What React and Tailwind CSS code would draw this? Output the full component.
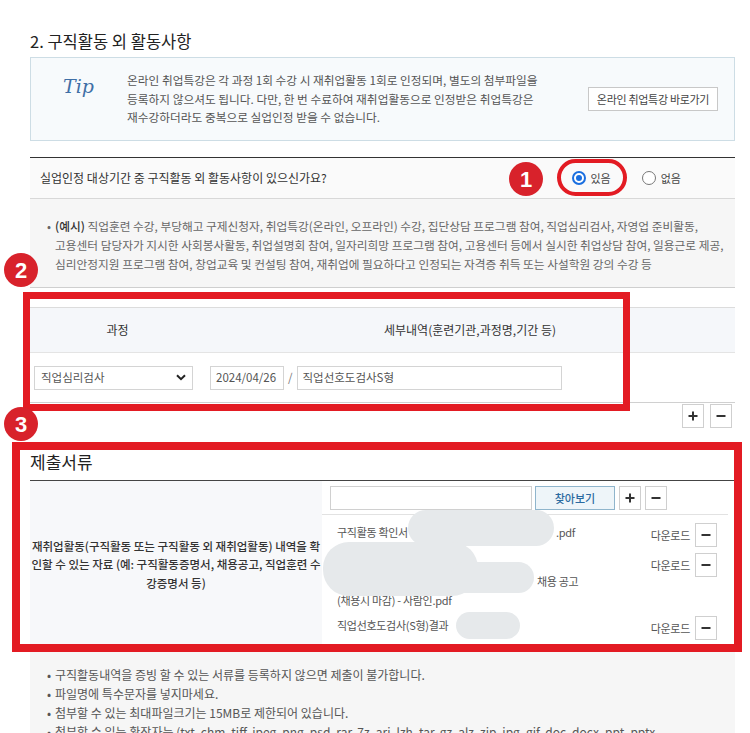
import React from "react";

function Plus() {
  return (
    <svg width="10" height="10" viewBox="0 0 10 10">
      <path d="M5 0.5V9.5M0.5 5H9.5" stroke="#333" strokeWidth="2" />
    </svg>
  );
}
function Minus() {
  return (
    <svg width="10" height="10" viewBox="0 0 10 10">
      <path d="M0.5 5H9.5" stroke="#333" strokeWidth="2" />
    </svg>
  );
}
function SqBtn({ children }) {
  return (
    <div className="w-[22px] h-[24px] border border-[#cfcfcf] bg-white flex items-center justify-center shrink-0">
      {children}
    </div>
  );
}
function Badge({ n, cls }) {
  return (
    <div
      className={
        "absolute w-[34px] h-[34px] rounded-full bg-[#d8222b] flex items-center justify-center text-white text-[22px] font-bold font-['Liberation_Sans',sans-serif] " +
        cls
      }
    >
      {n}
    </div>
  );
}

export default function App() {
  return (
    <div className="relative w-[750px] h-[733px] overflow-hidden bg-white text-[#555] font-['Noto_Sans_CJK_KR',sans-serif]">
      <div className="ml-[30px] w-[705px] pt-[31px]">
        <h2 className="text-[16.5px] leading-[20px] text-[#222]">2. 구직활동 외 활동사항</h2>

        {/* Tip box */}
        <div className="mt-[6px] h-[84px] border border-[#cddde5] bg-[#f7fafc] flex items-center">
          <div className="w-[96px] self-start pt-[14px] pl-[32px] font-['DejaVu_Serif',serif] italic text-[19px] text-[#3f6fa6]">
            Tip
          </div>
          <div className="flex-1 text-[11.7px] leading-[18.5px] text-[#555] whitespace-nowrap">
            <div>온라인 취업특강은 각 과정 1회 수강 시 재취업활동 1회로 인정되며, 별도의 첨부파일을</div>
            <div>등록하지 않으셔도 됩니다. 다만, 한 번 수료하여 재취업활동으로 인정받은 취업특강은</div>
            <div>재수강하더라도 중복으로 실업인정 받을 수 없습니다.</div>
          </div>
          <div className="mr-[16px] w-[130px] h-[24px] border border-[#c8c8c8] bg-white text-[11px] tracking-[-0.3px] text-[#444] flex items-center justify-center">
            온라인 취업특강 바로가기
          </div>
        </div>

        {/* Question row */}
        <div className="mt-[16px] h-[42px] border-t border-t-[#333] border-b border-b-[#d8d8d8] bg-[#fafafa] flex items-center pl-[10px]">
          <div className="text-[12px] text-[#333]">실업인정 대상기간 중 구직활동 외 활동사항이 있으신가요?</div>
          <div className="ml-auto mr-[54px] flex items-center text-[11px] text-[#444]">
            <div className="w-[14px] h-[14px] rounded-full border-2 border-[#1a6fe0] bg-white flex items-center justify-center">
              <div className="w-[6px] h-[6px] rounded-full bg-[#1a6fe0]" />
            </div>
            <span className="ml-[5px]">있음</span>
            <div className="ml-[31px] w-[14px] h-[14px] rounded-full border border-[#777] bg-white" />
            <span className="ml-[5px]">없음</span>
          </div>
        </div>

        {/* Example box */}
        <div className="bg-[#f6f6f6] border-b border-[#cfcfcf] pt-[17px] pb-[14px] pl-[17px] text-[11.7px] leading-[19px] text-[#666] flex">
          <span className="w-[8px] shrink-0">•</span>
          <div className="whitespace-nowrap">
            <div>
              <span className="text-[#333] font-medium">(예시)</span> 직업훈련 수강, 부당해고 구제신청자, 취업특강(온라인, 오프라인) 수강, 집단상담 프로그램 참여, 직업심리검사, 자영업 준비활동,
            </div>
            <div>고용센터 담당자가 지시한 사회봉사활동, 취업설명회 참여, 일자리희망 프로그램 참여, 고용센터 등에서 실시한 취업상담 참여, 일용근로 제공,</div>
            <div>심리안정지원 프로그램 참여, 창업교육 및 컨설팅 참여, 재취업에 필요하다고 인정되는 자격증 취득 또는 사설학원 강의 수강 등</div>
          </div>
        </div>

        {/* Activity table */}
        <div className="mt-[19px] h-[46px] bg-[#f5f7fa] border-t border-[#dcdcdc] border-b border-b-[#e4e4e4] flex items-center text-[12px] text-[#333]">
          <div className="w-[175px] text-center">과정</div>
          <div className="flex-1 text-center">세부내역(훈련기관,과정명,기간 등)</div>
        </div>
        <div className="h-[50px] border-b border-[#d0d0d0] flex items-center text-[11.5px] text-[#555]">
          <div className="w-[175px] pl-[4px]">
            <div className="w-[159px] h-[24px] border border-[#d4d4d4] bg-white flex items-center pl-[6px] pr-[6px]">
              <span>직업심리검사</span>
              <svg className="ml-auto" width="10" height="7" viewBox="0 0 10 7">
                <path d="M1 1.2L5 5.2L9 1.2" fill="none" stroke="#222" strokeWidth="2" />
              </svg>
            </div>
          </div>
          <div className="flex items-center pl-[5px]">
            <div className="w-[74px] h-[24px] border border-[#d4d4d4] bg-white flex items-center pl-[5px]">2024/04/26</div>
            <span className="mx-[4px] text-[#777]">/</span>
            <div className="w-[265px] h-[24px] border border-[#d4d4d4] bg-white flex items-center pl-[5px]">직업선호도검사S형</div>
          </div>
        </div>
        <div className="flex justify-end gap-[6px] pr-[3px] pt-[1px]">
          <SqBtn><Plus /></SqBtn>
          <SqBtn><Minus /></SqBtn>
        </div>

        {/* 제출서류 */}
        <div className="mt-[23px] text-[17px] leading-[22px] text-[#222] pb-[7px] border-b border-[#444]">제출서류</div>
        <div className="flex h-[167px]">
          <div className="w-[292px] bg-[#f7f8fa] flex items-center justify-center text-center text-[11.5px] leading-[18.5px] text-[#333] font-medium whitespace-nowrap">
            <div>
              <div>재취업활동(구직활동 또는 구직활동 외 재취업활동) 내역을 확</div>
              <div>인할 수 있는 자료 (예: 구직활동증명서, 채용공고, 직업훈련 수</div>
              <div>강증명서 등)</div>
            </div>
          </div>
          <div className="flex-1 flex flex-col">
            <div className="h-[34px] mr-[7px] border-b border-[#e2e2e2] flex items-start pt-[5px] pl-[8px]">
              <div className="w-[202px] h-[24px] border border-[#d0d0d0] bg-white" />
              <div className="ml-[3px] w-[80px] h-[24px] border border-[#8fb5cc] bg-[#eef5f9] text-[#2a6aa0] text-[11px] font-medium flex items-center justify-center">
                찾아보기
              </div>
              <div className="ml-[4px]"><SqBtn><Plus /></SqBtn></div>
              <div className="ml-[4px]"><SqBtn><Minus /></SqBtn></div>
            </div>
            <div className="pl-[15px] pt-[8px] flex flex-col gap-[6px] text-[11px] tracking-[-0.3px] leading-[19px] text-[#555]">
              <div className="flex items-start">
                <div className="whitespace-nowrap">구직활동 확인서<span className="inline-block w-[148px]" />.pdf</div>
                <div className="ml-auto mr-[18px] flex items-center">
                  <span>다운로드</span>
                  <div className="ml-[5px]"><SqBtn><Minus /></SqBtn></div>
                </div>
              </div>
              <div className="flex items-start">
                <div className="whitespace-nowrap">
                  <div>&nbsp;</div>
                  <div><span className="inline-block w-[200px]" />채용 공고</div>
                  <div>(채용시 마감) - 사람인.pdf</div>
                </div>
                <div className="ml-auto mr-[18px] flex items-center">
                  <span>다운로드</span>
                  <div className="ml-[5px]"><SqBtn><Minus /></SqBtn></div>
                </div>
              </div>
              <div className="flex items-start">
                <div className="whitespace-nowrap">직업선호도검사(S형)결과</div>
                <div className="ml-auto mr-[18px] flex items-center">
                  <span>다운로드</span>
                  <div className="ml-[5px]"><SqBtn><Minus /></SqBtn></div>
                </div>
              </div>
            </div>
          </div>
        </div>

        {/* Notes */}
        <div className="bg-[#f6f6f6] pt-[17px] pl-[17px] pb-[20px] text-[12px] leading-[19px] text-[#555] whitespace-nowrap">
          <div className="flex"><span className="w-[8px]">•</span><span>구직활동내역을 증빙 할 수 있는 서류를 등록하지 않으면 제출이 불가합니다.</span></div>
          <div className="flex"><span className="w-[8px]">•</span><span>파일명에 특수문자를 넣지마세요.</span></div>
          <div className="flex"><span className="w-[8px]">•</span><span>첨부할 수 있는 최대파일크기는 15MB로 제한되어 있습니다.</span></div>
          <div className="flex"><span className="w-[8px]">•</span><span>첨부할 수 있는 확장자는 (txt, chm, tiff, jpeg, png, psd, rar, 7z, arj, lzh, tar, gz, alz, zip, jpg, gif, doc, docx, ppt, pptx,</span></div>
        </div>
      </div>

      {/* Privacy blobs */}
      <div className="absolute left-[408px] top-[510px] w-[146px] h-[36px] rounded-full bg-[#e6e9eb]" />
      <div className="absolute left-[323px] top-[542px] w-[155px] h-[54px] rounded-[26px] bg-[#e6e9eb]" />
      <div className="absolute left-[450px] top-[562px] w-[84px] h-[31px] rounded-full bg-[#e6e9eb]" />
      <div className="absolute left-[456px] top-[612px] w-[64px] h-[27px] rounded-full bg-[#e6e9eb]" />

      {/* Annotations */}
      <div className="absolute left-[557px] top-[159px] w-[70px] h-[37px] rounded-full border-[4px] border-[#e31b23]" />
      <div className="absolute left-[23px] top-[292px] w-[607px] h-[119px] border-[7px] border-[#e31b23]" />
      <div className="absolute left-[12px] top-[442px] w-[730px] h-[210px] border-[8px] border-[#e31b23]" />
      <Badge n="1" cls="left-[509px] top-[162px]" />
      <Badge n="2" cls="left-[4px] top-[253px]" />
      <Badge n="3" cls="left-[4px] top-[407px]" />
    </div>
  );
}
